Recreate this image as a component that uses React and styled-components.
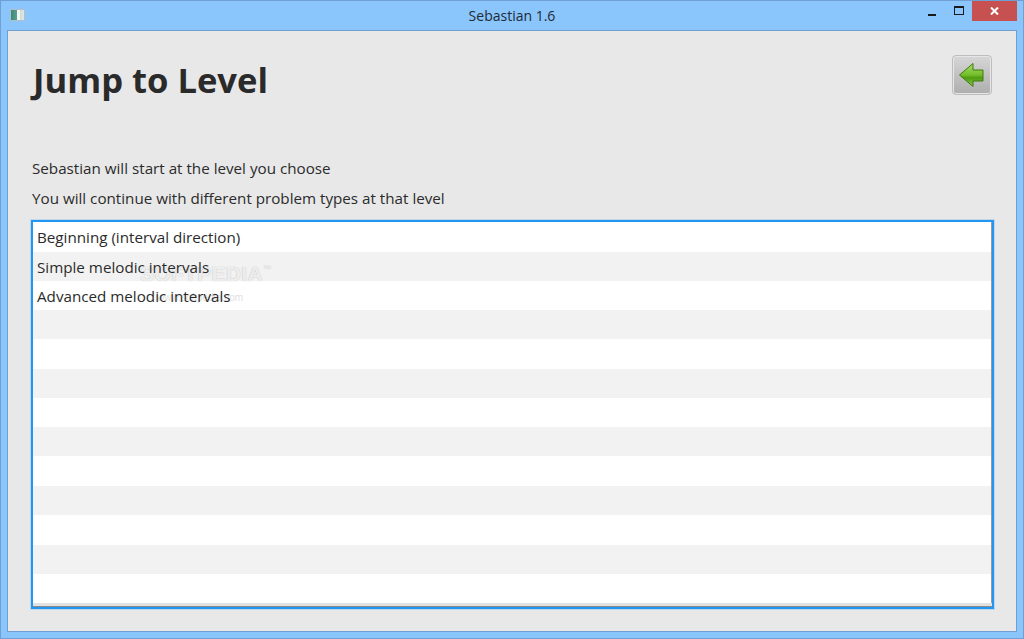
import React from "react";
import styled, { createGlobalStyle } from "styled-components";

const GlobalStyle = createGlobalStyle`
  html, body { margin: 0; padding: 0; background: #8ac5fb; }
  body { font-family: "Open Sans", "Noto Sans", sans-serif; }
`;

const Win = styled.div`
  width: 1024px;
  height: 639px;
  box-sizing: border-box;
  background: #8ac5fb;
  border: 1px solid #6f9fd3;
  display: flex;
  flex-direction: column;
  overflow: hidden;
`;

const TitleBar = styled.div`
  height: 29px;
  flex-shrink: 0;
  display: grid;
  grid-template-columns: 200px 1fr 200px;
  align-items: start;
`;

const AppIcon = styled.div`
  margin: 8px 0 0 9px;
  width: 15px;
  height: 12px;
  box-sizing: border-box;
  border: 1px solid #b4bdc8;
  border-radius: 1px;
  background: linear-gradient(90deg, #3c8878 0, #58a58e 50%, #f4f6f6 50%, #f4f6f6 70%, #cfdcd6 70%, #dfe8e4 100%);
`;

const WinTitle = styled.div`
  text-align: center;
  font-family: "Open Sans", sans-serif;
  font-size: 14px;
  line-height: 30px;
  color: #1d2a38;
`;

const Controls = styled.div`
  display: flex;
  justify-content: flex-end;
  align-items: flex-start;
  padding-right: 6px;
`;

const CtlBtn = styled.div`
  height: 20px;
  width: ${({ $close }) => ($close ? "45px" : "27px")};
  background: ${({ $close }) => ($close ? "#c75050" : "transparent")};
  display: flex;
  align-items: center;
  justify-content: center;
`;

const MinGlyph = styled.svg`
  margin-top: 7px;
`;

const MaxGlyph = styled.svg`
  margin-top: -2px;
`;

const Panel = styled.div`
  flex: 1;
  margin: 0 6px 6px 6px;
  border: 1px solid #6f9fd3;
  background: #e8e8e8;
  padding: 0 22px 22px 23px;
  display: flex;
  flex-direction: column;
  min-height: 0;
`;

const Header = styled.div`
  display: flex;
  justify-content: space-between;
  align-items: flex-start;
  height: 122px;
  flex-shrink: 0;
  padding-left: 2px;
`;

const Heading = styled.h1`
  margin: 24px 0 0;
  font-family: "Open Sans", sans-serif;
  font-size: 34.6px;
  line-height: 50px;
  font-weight: 700;
  color: #2a2a2a;
`;

const BackButton = styled.button`
  margin-top: 24px;
  margin-right: 2px;
  width: 40px;
  height: 40px;
  padding: 0;
  box-sizing: border-box;
  border: 1px solid #bdbdbd;
  border-radius: 4px;
  background: linear-gradient(#d6d6d6, #aeaeae);
  box-shadow: inset 0 0 0 1px #e6e6e6;
  display: flex;
  align-items: center;
  justify-content: center;
`;

const Line = styled.p`
  margin: 0;
  height: 30px;
  padding-left: 1px;
  font-size: 15.2px;
  line-height: 30px;
  color: #2b2b2b;
`;

const List = styled.div`
  position: relative;
  isolation: isolate;
  margin-top: 7px;
  height: 389px;
  box-sizing: border-box;
  border: 2px solid #2196f3;
  box-shadow: 0 0 0 1px rgba(33, 150, 243, 0.2);
  background: #fff;
  overflow: hidden;
  flex-shrink: 0;
`;

const Row = styled.div`
  height: ${({ $tall }) => ($tall ? "30px" : "29px")};
  padding-left: 4px;
  background: ${({ $odd }) => ($odd ? "#f2f2f2" : "#fff")};
  font-size: 15.2px;
  line-height: 30px;
  color: #2b2b2b;
`;

const RowText = styled.span`
  position: relative;
  z-index: 2;
`;

const BottomEdge = styled.div`
  position: absolute;
  left: 0;
  right: 0;
  bottom: 0;
  height: 4px;
  background: linear-gradient(#e2e2e2 75%, #8a8a8a 75%);
`;

const RightEdge = styled.div`
  position: absolute;
  top: 0;
  right: 0;
  bottom: 0;
  width: 1px;
  background: #9a9a9a;
`;

const Watermark = styled.div`
  position: absolute;
  z-index: 1;
  left: 107px;
  top: 40px;
  font-family: "Liberation Sans", sans-serif;
  font-size: 21px;
  font-weight: 700;
  letter-spacing: 0.3px;
  color: rgba(255, 255, 255, 0.8);
  text-shadow: 0 0 1px rgba(150, 150, 150, 0.8);
  pointer-events: none;
  sup { font-size: 8px; font-weight: 400; vertical-align: 10px; }
`;

const WatermarkUrl = styled.div`
  position: absolute;
  z-index: 1;
  left: 124px;
  top: 70px;
  font-family: "Liberation Sans", sans-serif;
  font-size: 10px;
  color: rgba(190, 190, 190, 0.5);
  pointer-events: none;
`;

const levels = [
  "Beginning (interval direction)",
  "Simple melodic intervals",
  "Advanced melodic intervals",
  "", "", "", "", "", "", "", "", "", "",
];

// the rows are 29.25px in the original, snapped to whole pixels
const tallRows = [0, 4, 8, 10];

export default function App() {
  return (
    <Win>
      <GlobalStyle />
      <TitleBar>
        <AppIcon />
        <WinTitle>Sebastian 1.6</WinTitle>
        <Controls>
          <CtlBtn>
            <MinGlyph width="8" height="2" viewBox="0 0 8 2"><rect width="8" height="2" fill="#1a1a1a" /></MinGlyph>
          </CtlBtn>
          <CtlBtn>
            <MaxGlyph width="10" height="9" viewBox="0 0 10 9">
              <rect x="0.5" y="0.5" width="9" height="8" fill="none" stroke="#1a1a1a" />
              <rect x="0" y="0" width="10" height="2" fill="#1a1a1a" />
            </MaxGlyph>
          </CtlBtn>
          <CtlBtn $close>
            <svg width="9" height="8" viewBox="0 0 9 8">
              <path d="M1 0.5 L8 7.5 M8 0.5 L1 7.5" stroke="#fff" strokeWidth="2" />
            </svg>
          </CtlBtn>
        </Controls>
      </TitleBar>
      <Panel>
        <Header>
          <Heading>Jump to Level</Heading>
          <BackButton aria-label="Back">
            <svg width="26" height="26" viewBox="0 0 26 26">
              <defs>
                <linearGradient id="arrowFill" x1="0" y1="0" x2="0" y2="1">
                  <stop offset="0" stopColor="#a9dc6c" />
                  <stop offset="0.5" stopColor="#74bd2a" />
                  <stop offset="0.62" stopColor="#4f9c10" />
                  <stop offset="1" stopColor="#8cc94e" />
                </linearGradient>
              </defs>
              <path d="M0.5 13 L14 1.5 V8 H24 V19 H14 V24.5 Z" fill="url(#arrowFill)" stroke="#3f7a0c" strokeWidth="1" />
            </svg>
          </BackButton>
        </Header>
        <Line>Sebastian will start at the level you choose</Line>
        <Line>You will continue with different problem types at that level</Line>
        <List>
          {levels.map((label, i) => (
            <Row key={i} $odd={i % 2 === 1} $tall={tallRows.includes(i)}>
              <RowText>{label}</RowText>
            </Row>
          ))}
          <Watermark>SOFTPEDIA<sup>™</sup></Watermark>
          <WatermarkUrl>www.softpedia.com</WatermarkUrl>
          <RightEdge />
          <BottomEdge />
        </List>
      </Panel>
    </Win>
  );
}
